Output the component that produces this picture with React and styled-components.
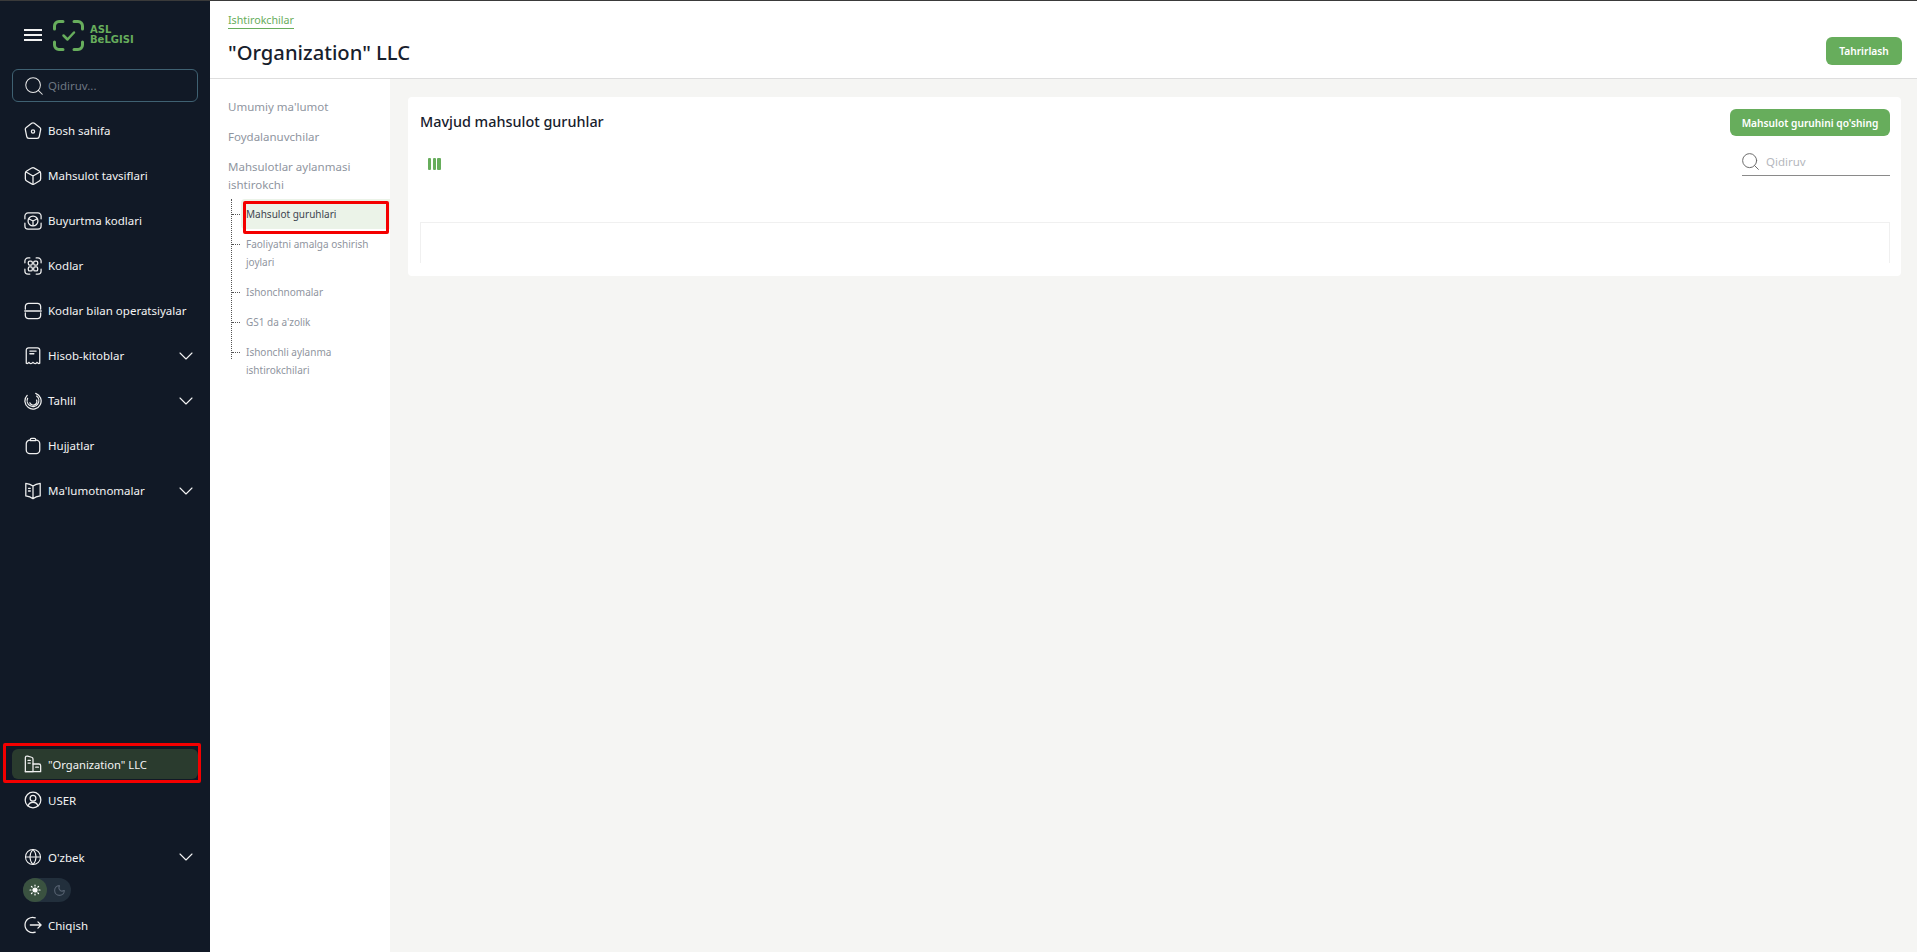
import styled, { createGlobalStyle } from 'styled-components';
import { Search, ChevronDown, Sun, Moon, Globe } from 'lucide-react';

const GlobalStyle = createGlobalStyle`
  html, body { margin: 0; padding: 0; height: 100%; background: #f5f5f3; }
  #root { height: 100%; }
  * { box-sizing: border-box; }
  body { font-family: "Noto Sans", "Open Sans", sans-serif; overflow: hidden; }
`;

const Page = styled.div`
  display: flex;
  height: 952px;
  border-top: 1px solid #3a3a3a;
`;

const Sidebar = styled.aside`
  width: 210px;
  flex: none;
  background: #111926;
  display: flex;
  flex-direction: column;
  position: relative;
  padding: 0 12px;
`;

const Brand = styled.div`
  display: flex;
  align-items: center;
  height: 68px;
  padding-left: 12px;
`;

const Burger = styled.div`
  width: 18px;
  margin-right: 11px;
  display: flex;
  flex-direction: column;
  gap: 3.5px;
  & > span { height: 1.7px; background: #f2f2f2; }
`;

const LogoText = styled.div`
  font-family: "DejaVu Sans", sans-serif;
  font-weight: 700;
  font-size: 10px;
  line-height: 10.5px;
  color: #67ad5c;
  margin-left: 6px;
`;

const SearchBox = styled.div`
  height: 33px;
  border: 1px solid #3f6172;
  border-radius: 6px;
  display: flex;
  align-items: center;
  padding-left: 10px;
  gap: 3px;
  color: #e8e8e8;
  font-size: 11.5px;
  margin-bottom: 6px;
  & > span { color: #6d7682; }
`;

const NavList = styled.nav`
  display: flex;
  flex-direction: column;
`;

const NavRow = styled.div`
  height: 45px;
  display: flex;
  align-items: center;
  padding-left: 12px;
  gap: 6px;
  color: #f4f4f4;
  font-size: 11.5px;
  & > svg:first-child { flex: none; }
`;

const NavLabel = styled.span`
  flex: 1;
  white-space: nowrap;
`;

const Bottom = styled.div`
  margin-top: auto;
  display: flex;
  flex-direction: column;
  padding-bottom: 5px;
`;

const OrgRow = styled.div`
  height: 30px;
  background: #2a3b2e;
  border-radius: 6px;
  display: flex;
  align-items: center;
  padding-left: 12px;
  gap: 6px;
  color: #f4f4f4;
  font-size: 11.2px;
`;

const UserRow = styled(NavRow)`
  height: 42px;
  margin-bottom: 15px;
`;

const LangRow = styled(NavRow)`
  height: 42px;
`;

const Toggle = styled.div`
  margin: 0 0 1px 11px;
  width: 48px;
  height: 24px;
  border-radius: 12px;
  background: #222f3c;
  display: flex;
`;

const ToggleKnob = styled.div`
  width: 24px;
  height: 24px;
  border-radius: 12px;
  display: flex;
  align-items: center;
  justify-content: center;
  background: ${(p) => (p.$active ? '#3a5240' : 'transparent')};
  color: ${(p) => (p.$active ? '#fff' : '#566271')};
`;

const ExitRow = styled(NavRow)`
  height: 44px;
`;

const RedFrame = styled.div`
  position: absolute;
  border: 3px solid #f40000;
  border-radius: 2px;
  left: ${(p) => p.$left}px;
  top: ${(p) => p.$top}px;
  width: ${(p) => p.$width}px;
  height: ${(p) => p.$height}px;
  pointer-events: none;
`;

const Main = styled.main`
  flex: 1;
  display: flex;
  flex-direction: column;
  min-width: 0;
`;

const Header = styled.header`
  height: 78px;
  flex: none;
  background: #fff;
  border-bottom: 1px solid #dedede;
  display: flex;
  align-items: flex-end;
  justify-content: space-between;
  padding: 0 15px 13px 18px;
`;

const Crumb = styled.a`
  display: inline-block;
  font-size: 10.7px;
  line-height: 15px;
  color: #67ad5c;
  border-bottom: 1px solid #67ad5c;
  margin-bottom: 10px;
`;

const Title = styled.h1`
  margin: 0 0 -1px;
  font-size: 20.2px;
  line-height: 27px;
  font-weight: 500;
  color: #17202c;
`;

const GreenButton = styled.button`
  width: ${(p) => p.$width}px;
  height: ${(p) => p.$height}px;
  border: none;
  border-radius: 6px;
  background: #67ad5c;
  color: #fff;
  font-family: inherit;
  font-size: 10.2px;
  font-weight: 600;
  padding: 0;
`;

const Body = styled.div`
  flex: 1;
  display: flex;
  min-height: 0;
`;

const SubNav = styled.div`
  width: 180px;
  flex: none;
  background: #fff;
  padding: 16px 0 0 18px;
  position: relative;
`;

const SubLink = styled.div`
  font-size: 11.5px;
  line-height: 18px;
  color: #8f95a0;
  padding: 3px 0;
  margin-bottom: 6px;
`;

const Tree = styled.div`
  border-left: 1px dotted #555;
  margin: -4px 0 0 3px;
  height: 160px;
  display: flex;
  flex-direction: column;
`;

const TreeItem = styled.div`
  position: relative;
  margin-left: 9px;
  padding: 6px 0 6px 5px;
  font-size: 10px;
  line-height: 18px;
  color: ${(p) => (p.$active ? '#3d4550' : '#8f95a0')};
  background: ${(p) => (p.$active ? '#ebf3e8' : 'transparent')};
  border-radius: 4px 0 0 4px;
  width: 149px;
  white-space: pre-line;
  &::before {
    content: '';
    position: absolute;
    left: -9px;
    top: 15px;
    width: 8px;
    border-top: 1px dotted #555;
  }
`;

const Content = styled.div`
  flex: 1;
  padding: 18px 16px 0 18px;
  min-width: 0;
`;

const Card = styled.section`
  background: #fff;
  border-radius: 4px;
  height: 179px;
  padding: 12px 11px 0 12px;
  display: flex;
  flex-direction: column;
`;

const CardTop = styled.div`
  display: flex;
  align-items: center;
  justify-content: space-between;
`;

const CardTitle = styled.h2`
  margin: 0 0 2px;
  font-size: 14.4px;
  font-weight: 500;
  color: #17202c;
`;

const Tools = styled.div`
  display: flex;
  justify-content: space-between;
  margin-top: 12px;
  height: 28px;
  padding-left: 8px;
`;

const ColumnsIcon = styled.div`
  display: flex;
  gap: 1.5px;
  margin-top: 10px;
  & > span { width: 3.2px; height: 12px; background: #67ad5c; border-radius: 1px; }
`;

const TableSearch = styled.div`
  width: 148px;
  height: 28px;
  border-bottom: 1px solid #8a8a8a;
  display: flex;
  align-items: center;
  gap: 5px;
  font-size: 11.5px;
  color: #b5b8bd;
  & > svg { color: #666; margin-left: -2px; }
`;

const TableShell = styled.div`
  margin-top: 46px;
  height: 41px;
  flex: none;
  border: 1px solid #f0f0f0;
  border-bottom: none;
`;

const stroke = { fill: 'none', stroke: '#f0f0f0', strokeWidth: 1.4, strokeLinecap: 'round', strokeLinejoin: 'round' };

const Icon = ({ children }) => (
  <svg width="18" height="18" viewBox="0 0 20 20" {...stroke}>{children}</svg>
);

const Logo = () => (
  <svg width="31" height="31" viewBox="0 0 31 31" fill="none" stroke="#67ad5c" strokeWidth="3" strokeLinecap="round" strokeLinejoin="round">
    <path d="M1.500 9V6A4.500 4.500 0 0 1 6 1.500h4M21 1.500h4A4.500 4.500 0 0 1 29.500 6v3M29.500 22v3a4.500 4.500 0 0 1-4.500 4.500h-4M10 29.500H6A4.500 4.500 0 0 1 1.500 25v-3" />
    <path d="M10.500 15.500l4 4 6.500-7" strokeWidth="2.500" />
  </svg>
);

const HomeIcon = () => (
  <Icon>
    <path d="M8.500 1.500a2.500 2.500 0 0 1 3 0l6 4.500a2.500 2.500 0 0 1 1 2.500l-1.500 7.500a2.500 2.500 0 0 1-2.500 2.200h-9a2.500 2.500 0 0 1-2.500-2.200L1.500 8.500a2.500 2.500 0 0 1 1-2.500z" />
    <circle cx="10" cy="10.500" r="1.800" />
  </Icon>
);

const CubeIcon = () => (
  <Icon>
    <path d="M8.500 1.200a3 3 0 0 1 3 0l5.500 3.200a3 3 0 0 1 1.500 2.600v6a3 3 0 0 1-1.500 2.600l-5.500 3.200a3 3 0 0 1-3 0L3 15.600A3 3 0 0 1 1.500 13V7A3 3 0 0 1 3 4.400z" />
    <path d="M2.300 5.500L10 10l7.700-4.500M10 10v9.500" />
  </Icon>
);

const OrdersIcon = () => (
  <Icon>
    <path d="M1 7.500V4.500A3.500 3.500 0 0 1 4.500 1h11A3.500 3.500 0 0 1 19 4.500v3M19 12.500v3a3.500 3.500 0 0 1-3.500 3.500h-11A3.500 3.500 0 0 1 1 15.500v-3" />
    <circle cx="10" cy="10" r="5.500" />
    <path d="M5.800 7.800L10 10l4.200-2.200M10 10v5" />
  </Icon>
);

const CodesIcon = () => (
  <Icon>
    <rect x="4.800" y="4.500" width="4.400" height="4.500" rx="1.400" />
    <rect x="10.800" y="4.500" width="4.400" height="4.500" rx="1.400" />
    <rect x="4.800" y="11" width="4.400" height="4.500" rx="1.400" />
    <rect x="10.800" y="11" width="4.400" height="4.500" rx="1.400" />
    <path d="M1 6.500V4.500A3.500 3.500 0 0 1 4.500 1h2M13.500 1h2A3.500 3.500 0 0 1 19 4.500v2M19 13.500v2a3.500 3.500 0 0 1-3.500 3.500h-2M6.500 19h-2A3.500 3.500 0 0 1 1 15.500v-2" />
  </Icon>
);

const OperationsIcon = () => (
  <Icon>
    <path d="M1.500 8V5A3.500 3.500 0 0 1 5 1.500h10A3.500 3.500 0 0 1 18.500 5v3M1.500 12v3A3.500 3.500 0 0 0 5 18.500h10a3.500 3.500 0 0 0 3.500-3.500v-3M.8 10h18.400" />
  </Icon>
);

const ReceiptIcon = () => (
  <Icon>
    <path d="M2.500 3.500A2.500 2.500 0 0 1 5 1h10a2.500 2.500 0 0 1 2.500 2.500V18c-1.200.8-2 .3-3-1-1 2-3 1.800-4.500 0-1.500 1.800-3.500 2-4.500 0-1 1.300-1.800 1.800-3 1z" />
    <path d="M6.500 4.500h7M6.500 7.500h4.500" />
  </Icon>
);

const AnalyticsIcon = () => (
  <Icon>
    <path d="M13 1.500A9 9 0 1 1 3.500 3.800" />
    <path d="M14 4.500A6.500 6.500 0 1 1 4 7" />
    <path d="M14 9a4 4 0 0 1-7.500 3" />
  </Icon>
);

const DocsIcon = () => (
  <Icon>
    <path d="M6.500 3.500A4 4 0 0 0 2.500 7.500v7a4 4 0 0 0 4 4h7a4 4 0 0 0 4-4v-7a4 4 0 0 0-4-4" />
    <path d="M7 3a1.500 1.500 0 0 1 1.500-1.500h3A1.500 1.500 0 0 1 13 3v1H7z" />
  </Icon>
);

const BookIcon = () => (
  <Icon>
    <path d="M10 4.500C8 3 5.500 2 2 1.500v14c3.500.5 6 1.500 8 3 2-1.500 4.500-2.500 8-3v-14c-3.500.5-6 1.500-8 3zM10 4.500v14" />
    <path d="M5 7h2M5 10h2" />
  </Icon>
);

const OrgIcon = () => (
  <Icon>
    <path d="M1.500 18.500V3a2 2 0 0 1 2.500-1.800l4.500 1.300A2 2 0 0 1 10 4.500v14z" />
    <path d="M4.500 6H7M4.500 9H7" />
    <path d="M10 10h6.500a2 2 0 0 1 2 2v6.500H1.500M13 13.500h3" />
  </Icon>
);

const UserIcon = () => (
  <Icon>
    <circle cx="10" cy="10" r="8.700" />
    <circle cx="10" cy="8" r="3.200" />
    <path d="M4.500 16.500c1-2.800 3-4 5.500-4s4.500 1.200 5.500 4" />
  </Icon>
);

const ExitIcon = () => (
  <Icon>
    <path d="M12.500 2A8.500 8.500 0 1 0 12.500 18M7 10h12M15.500 6.500L19 10l-3.500 3.500" />
  </Icon>
);

const menu = [
  { label: 'Bosh sahifa', icon: <HomeIcon /> },
  { label: 'Mahsulot tavsiflari', icon: <CubeIcon /> },
  { label: 'Buyurtma kodlari', icon: <OrdersIcon /> },
  { label: 'Kodlar', icon: <CodesIcon /> },
  { label: 'Kodlar bilan operatsiyalar', icon: <OperationsIcon /> },
  { label: 'Hisob-kitoblar', icon: <ReceiptIcon />, more: true },
  { label: 'Tahlil', icon: <AnalyticsIcon />, more: true },
  { label: 'Hujjatlar', icon: <DocsIcon /> },
  { label: "Ma'lumotnomalar", icon: <BookIcon />, more: true },
];

const App = () => (
  <Page>
    <GlobalStyle />
    <Sidebar>
      <Brand>
        <Burger><span /><span /><span /></Burger>
        <Logo />
        <LogoText>ASL<br />BeLGISI</LogoText>
      </Brand>
      <SearchBox>
        <Search size={22} strokeWidth={1.1} />
        <span>Qidiruv...</span>
      </SearchBox>
      <NavList>
        {menu.map((item) => (
          <NavRow key={item.label}>
            {item.icon}
            <NavLabel>{item.label}</NavLabel>
            {item.more && <ChevronDown size={24} strokeWidth={1.1} />}
          </NavRow>
        ))}
      </NavList>
      <Bottom>
        <OrgRow><OrgIcon /><NavLabel>"Organization" LLC</NavLabel></OrgRow>
        <UserRow><UserIcon /><NavLabel>USER</NavLabel></UserRow>
        <LangRow>
          <Globe size={18} strokeWidth={1.4} />
          <NavLabel>O'zbek</NavLabel>
          <ChevronDown size={24} strokeWidth={1.1} />
        </LangRow>
        <Toggle>
          <ToggleKnob $active><Sun size={12} fill="#fff" strokeWidth={2.4} /></ToggleKnob>
          <ToggleKnob><Moon size={13} /></ToggleKnob>
        </Toggle>
        <ExitRow><ExitIcon /><NavLabel>Chiqish</NavLabel></ExitRow>
      </Bottom>
      <RedFrame $left={3} $top={742} $width={198} $height={40} />
    </Sidebar>
    <Main>
      <Header>
        <div>
          <Crumb>Ishtirokchilar</Crumb>
          <Title>"Organization" LLC</Title>
        </div>
        <GreenButton $width={76} $height={28}>Tahrirlash</GreenButton>
      </Header>
      <Body>
        <SubNav>
          <SubLink>Umumiy ma'lumot</SubLink>
          <SubLink>Foydalanuvchilar</SubLink>
          <SubLink>Mahsulotlar aylanmasi<br />ishtirokchi</SubLink>
          <Tree>
            <TreeItem $active>Mahsulot guruhlari</TreeItem>
            <TreeItem>{'Faoliyatni amalga oshirish\njoylari'}</TreeItem>
            <TreeItem>Ishonchnomalar</TreeItem>
            <TreeItem>GS1 da a'zolik</TreeItem>
            <TreeItem>{'Ishonchli aylanma\nishtirokchilari'}</TreeItem>
          </Tree>
          <RedFrame $left={33} $top={122} $width={146} $height={33} />
        </SubNav>
        <Content>
          <Card>
            <CardTop>
              <CardTitle>Mavjud mahsulot guruhlar</CardTitle>
              <GreenButton $width={160} $height={27}>Mahsulot guruhini qo'shing</GreenButton>
            </CardTop>
            <Tools>
              <ColumnsIcon><span /><span /><span /></ColumnsIcon>
              <TableSearch>
                <Search size={21} strokeWidth={1.1} />
                Qidiruv
              </TableSearch>
            </Tools>
            <TableShell />
          </Card>
        </Content>
      </Body>
    </Main>
  </Page>
);

export default App;
